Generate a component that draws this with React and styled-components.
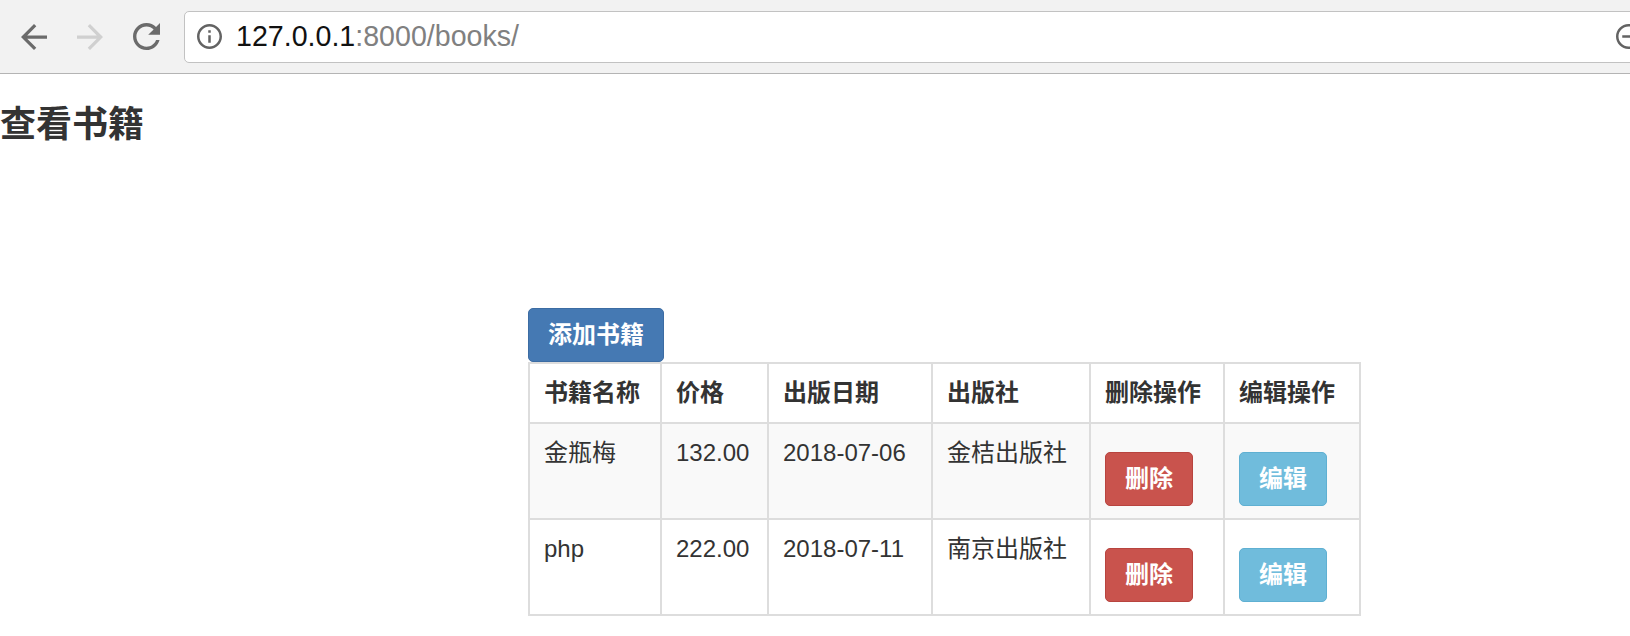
import styled, { createGlobalStyle } from "styled-components";

const GlobalStyle = createGlobalStyle`
  body {
    margin: 0;
    background: #fff;
    font-family: "Liberation Sans", "Noto Sans CJK SC", sans-serif;
    color: #333;
  }
`;

const Chrome = styled.div`
  height: 73px;
  background: #f2f2f2;
  border-bottom: 1px solid #b4b4b4;
  display: flex;
  align-items: center;
  padding-left: 6px;
  overflow: hidden;
`;

const NavButton = styled.div`
  width: 56px;
  height: 52px;
  display: flex;
  align-items: center;
  justify-content: center;
  color: ${(p) => (p.disabled ? "#d0d0d0" : "#6b6b6b")};
`;

const AddressBox = styled.div`
  flex: 1;
  height: 52px;
  margin-left: 10px;
  margin-right: -30px;
  background: #fff;
  border: 1px solid #c2c2c2;
  border-radius: 5px;
  display: flex;
  align-items: center;
  padding-left: 12px;
  padding-right: 18px;
  box-sizing: border-box;
  color: #636363;
`;

const Url = styled.span`
  margin-left: 14px;
  font-family: "Liberation Sans", sans-serif;
  font-size: 28.6px;
  color: #808080;
  flex: 1;
`;

const Host = styled.span`
  color: #111;
`;

const Title = styled.h3`
  margin: 31px 0 0;
  font-size: 36px;
  line-height: 40px;
  font-weight: bold;
  color: #333;
`;

const Content = styled.div`
  margin: 163px 0 0 528px;
  display: flex;
  flex-direction: column;
  align-items: flex-start;
`;

const Button = styled.button`
  font-family: "Liberation Sans", "Noto Sans CJK SC", sans-serif;
  font-size: 24px;
  line-height: 32px;
  padding: 10px 19px;
  border: 1px solid ${(p) => p.border};
  border-radius: 5px;
  background: ${(p) => p.bg};
  color: #fff;
  font-weight: bold;
  margin-top: ${(p) => p.top || 0}px;
  cursor: pointer;
`;

const Table = styled.table`
  border-collapse: collapse;
  table-layout: fixed;
  width: 831px;
  font-size: 24px;
  line-height: 34px;
`;

const Th = styled.th`
  border: 2px solid #ddd;
  padding: 12px 14px;
  text-align: left;
  vertical-align: top;
  font-weight: bold;
  color: #333;
`;

const Td = styled.td`
  border: 2px solid #ddd;
  padding: 12px 14px;
  text-align: left;
  vertical-align: top;
  color: #333;
`;

const Row = styled.tr`
  background: ${(p) => (p.striped ? "#f9f9f9" : "#fff")};
`;

const BackIcon = () => (
  <svg width="26" height="26" viewBox="4 4 16 16" fill="currentColor">
    <path d="M20 11H7.83l5.59-5.59L12 4l-8 8 8 8 1.41-1.41L7.83 13H20v-2z" />
  </svg>
);

const ForwardIcon = () => (
  <svg width="26" height="26" viewBox="4 4 16 16" fill="currentColor">
    <path d="M12 4l-1.41 1.41L16.17 11H4v2h12.17l-5.58 5.59L12 20l8-8z" />
  </svg>
);

const ReloadIcon = () => (
  <svg width="27" height="27" viewBox="4 4 16 16" fill="currentColor">
    <path d="M17.65 6.35C16.2 4.9 14.21 4 12 4c-4.42 0-7.99 3.58-7.99 8s3.57 8 7.99 8c3.73 0 6.84-2.55 7.73-6h-2.08c-.82 2.33-3.04 4-5.65 4-3.31 0-6-2.69-6-6s2.69-6 6-6c1.66 0 3.14.69 4.22 1.78L13 11h7V4l-2.35 2.35z" />
  </svg>
);

const InfoIcon = () => (
  <svg width="25" height="25" viewBox="2 2 20 20" fill="currentColor">
    <path d="M11 7h2v2h-2zm0 4h2v6h-2zm1-9C6.48 2 2 6.48 2 12s4.48 10 10 10 10-4.48 10-10S17.52 2 12 2zm0 18c-4.41 0-8-3.59-8-8s3.59-8 8-8 8 3.59 8 8-3.59 8-8 8z" />
  </svg>
);

const ZoomOutIcon = () => (
  <svg width="25" height="25" viewBox="2 2 20 20" fill="currentColor">
    <path d="M7 11h10v2H7zm5-9C6.48 2 2 6.48 2 12s4.48 10 10 10 10-4.48 10-10S17.52 2 12 2zm0 18c-4.41 0-8-3.59-8-8s3.59-8 8-8 8 3.59 8 8-3.59 8-8 8z" />
  </svg>
);

const books = [
  { name: "金瓶梅", price: "132.00", date: "2018-07-06", publisher: "金桔出版社" },
  { name: "php", price: "222.00", date: "2018-07-11", publisher: "南京出版社" },
];

const App = () => {
  return (
    <>
      <GlobalStyle />
      <Chrome>
        <NavButton>
          <BackIcon />
        </NavButton>
        <NavButton disabled>
          <ForwardIcon />
        </NavButton>
        <NavButton>
          <ReloadIcon />
        </NavButton>
        <AddressBox>
          <InfoIcon />
          <Url>
            <Host>127.0.0.1</Host>:8000/books/
          </Url>
          <ZoomOutIcon />
        </AddressBox>
      </Chrome>
      <Title>查看书籍</Title>
      <Content>
        <Button bg="#4579b3" border="#3c6ca3">
          添加书籍
        </Button>
        <Table>
          <colgroup>
            <col style={{ width: 132 }} />
            <col style={{ width: 107 }} />
            <col style={{ width: 164 }} />
            <col style={{ width: 158 }} />
            <col style={{ width: 134 }} />
            <col style={{ width: 136 }} />
          </colgroup>
          <thead>
            <Row>
              <Th>书籍名称</Th>
              <Th>价格</Th>
              <Th>出版日期</Th>
              <Th>出版社</Th>
              <Th>删除操作</Th>
              <Th>编辑操作</Th>
            </Row>
          </thead>
          <tbody>
            {books.map((book, i) => (
              <Row key={book.name} striped={i % 2 === 0}>
                <Td>{book.name}</Td>
                <Td>{book.price}</Td>
                <Td>{book.date}</Td>
                <Td>{book.publisher}</Td>
                <Td>
                  <Button bg="#c9534d" border="#b8443f" top={16}>
                    删除
                  </Button>
                </Td>
                <Td>
                  <Button bg="#70bcdc" border="#5fb0d2" top={16}>
                    编辑
                  </Button>
                </Td>
              </Row>
            ))}
          </tbody>
        </Table>
      </Content>
    </>
  );
};

export default App;
